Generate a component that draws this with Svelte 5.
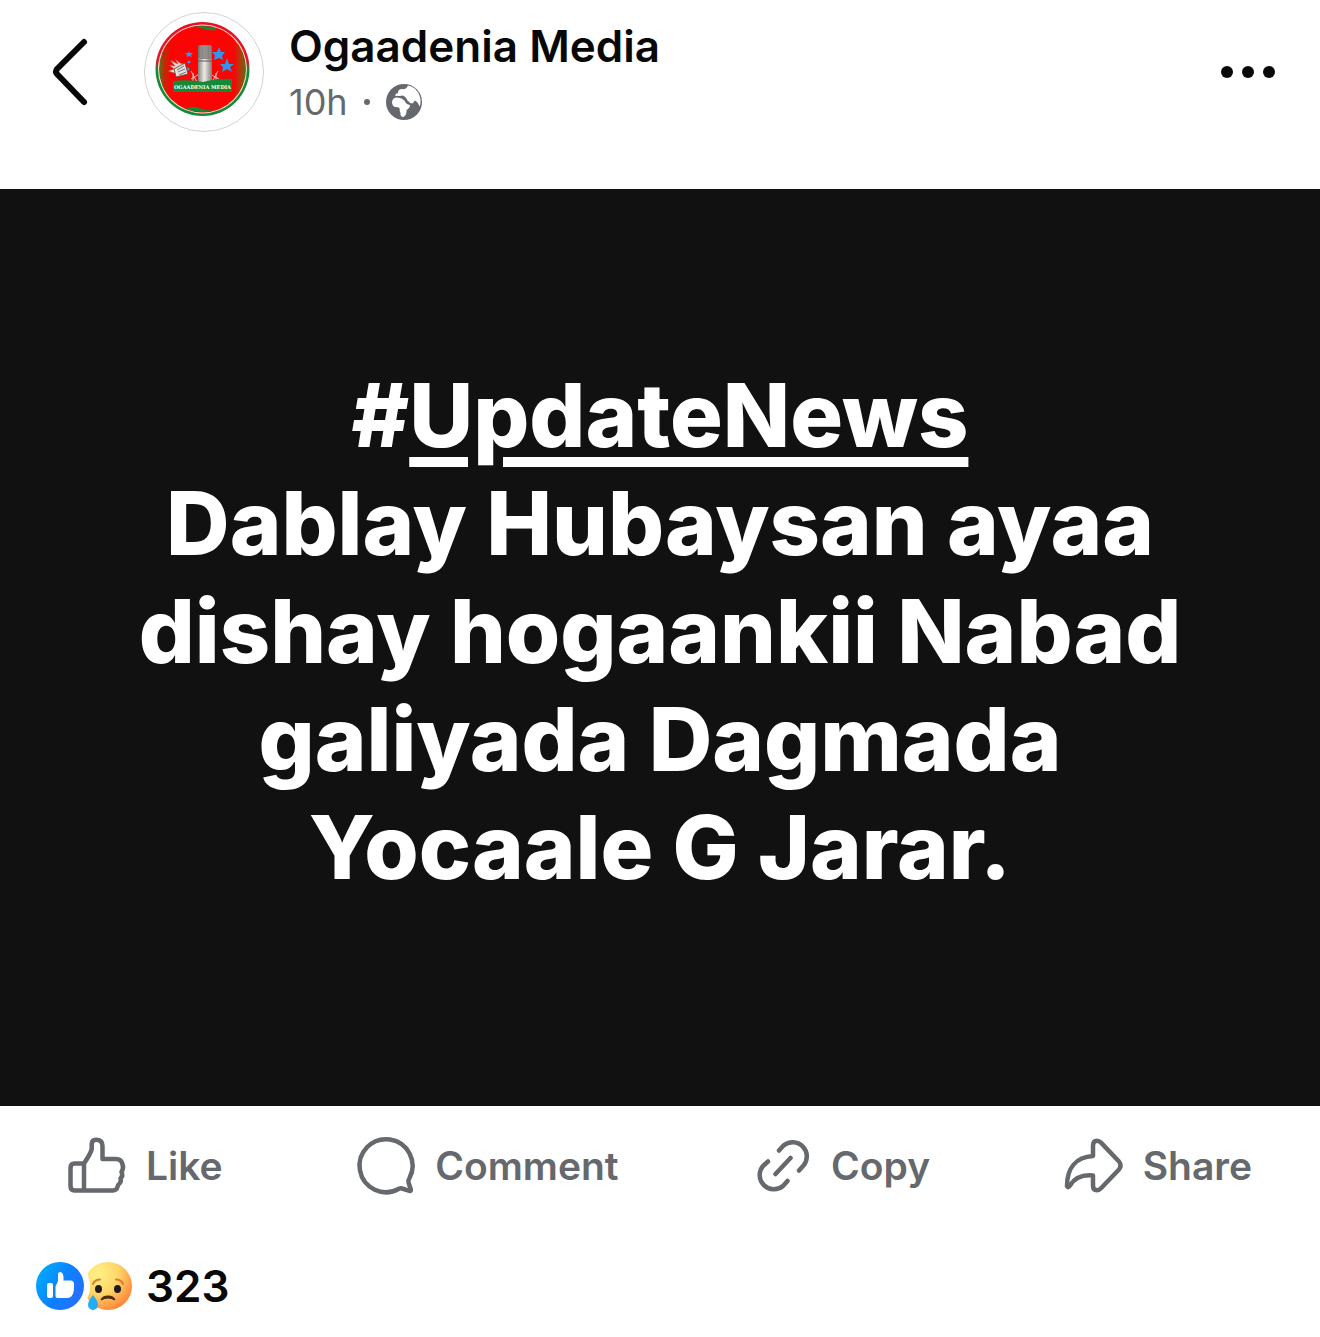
<script lang="ts">
  const post = {
    author: 'Ogaadenia Media',
    time: '10h',
    hashtag: 'UpdateNews',
    body: 'Dablay Hubaysan ayaa dishay hogaankii Nabad galiyada Dagmada Yocaale G Jarar.',
    reactions: 323,
  };

  const actions = [
    { label: 'Like', icon: 'like' },
    { label: 'Comment', icon: 'comment' },
    { label: 'Copy', icon: 'copy' },
    { label: 'Share', icon: 'share' },
  ];
</script>

<svelte:head>
  <title>{post.author}</title>
</svelte:head>

<article>
  <header>
    <button class="back" aria-label="Back">
      <svg width="36" height="66" viewBox="0 0 36 66">
        <path d="M32 3 L5 30 Q3 32.500 5 35 L32 63" fill="none" stroke="currentColor" stroke-width="6" stroke-linecap="round" stroke-linejoin="round" />
      </svg>
    </button>

    <a class="avatar" href="#profile" aria-label={post.author}>
      <svg width="120" height="120" viewBox="0 0 120 120">
        <defs>
          <clipPath id="disc"><circle cx="58.5" cy="57" r="43" /></clipPath>
          <linearGradient id="ring" x1="0" y1="0" x2="0" y2="1">
            <stop offset="0.42" stop-color="#e8112a" />
            <stop offset="0.5" stop-color="#128a38" />
          </linearGradient>
          <linearGradient id="field">
            <stop offset="0" stop-color="#4d7a1c" />
            <stop offset="0.06" stop-color="#c02a08" />
            <stop offset="0.14" stop-color="#fb0404" />
            <stop offset="0.86" stop-color="#fb0404" />
            <stop offset="0.93" stop-color="#b53a0c" />
            <stop offset="1" stop-color="#5f6a18" />
          </linearGradient>
          <linearGradient id="metal">
            <stop offset="0" stop-color="#86807c" />
            <stop offset="0.45" stop-color="#eeeae6" />
            <stop offset="1" stop-color="#847e7a" />
          </linearGradient>
        </defs>
        <circle cx="60" cy="60" r="59.5" fill="#fff" stroke="#d3d3d5" />
        <circle cx="58.5" cy="57" r="47" fill="url(#ring)" />
        <circle cx="58.5" cy="57" r="44.5" fill="#f4e3c8" />
        <circle cx="58.5" cy="57" r="43.5" fill="url(#field)" />
        <g clip-path="url(#disc)">
          <path d="M42 12 H72 V18 Q66 19 60 17 Q52 14 42 15Z" fill="#128a38" />
          <path d="M41 97 Q48 93 55 96 T75 99 V104 H40Z" fill="#128a38" />
        </g>
        <path d="M47 59 L53 70 M47 67 L57 61 M49 71 V61 M74 59 L68 70 M75 67 L64 61 M72 71 V61" stroke="#e3c4b8" />
        <rect x="54" y="33" width="14" height="38" rx="3" fill="url(#metal)" />
        <rect x="54" y="33" width="14" height="14" rx="3" fill="#746f6d" opacity="0.75" />
        <path d="M57 34 V46 M60 34 V46 M63 34 V46 M66 34 V46" stroke="#a39e9b" stroke-width="0.7" />
        <path d="M54 49 H68" stroke="#5e5a58" />
        <path d="M29 69 Q45 67 59 70 Q76 66 88 67 V80 H29Z" fill="#128a38" />
        <g fill="#3097ee">
          <path d="M75 35 L77 40 L81 40 L78 44 L79 48 L75 46 L70 48 L71 43 L68 40 L73 40Z" />
          <path d="M83 46 L85 52 L90 52 L86 55 L88 60 L83 57 L78 60 L79 55 L76 52 L81 52Z" />
          <path d="M45 39 L46 41 L49 41 L47 43 L48 45 L45 44 L43 45 L43 43 L41 41 L44 41Z" />
          <circle cx="45" cy="50" r="1.5" />
          <circle cx="44" cy="57" r="1.5" />
        </g>
        <path d="M26 48 L34 52 L31 47 L36 51 L40 52 L37 58 L30 61 L24 59 L30 57 L25 53 L31 54Z" fill="#ecd3c6" stroke="#8d4a3c" stroke-width="0.5" />
        <path d="M30 57 L41 51 L44 62 L32 65Z" fill="#e2dfdc" stroke="#5a4440" stroke-width="0.8" />
        <path d="M33 58 L40 54 M34 60 L41 57 M35 63 L42 60" stroke="#77706c" />
        <text x="58.5" y="77" text-anchor="middle">OGAADENIA MEDIA</text>
      </svg>
    </a>

    <div class="byline">
      <h1>{post.author}</h1>
      <p class="meta">
        <span>{post.time}</span>
        <span class="dot"></span>
        <svg width="36" height="36" viewBox="0 0 36 36" role="img" aria-label="Public">
          <circle cx="18" cy="18" r="18" fill="#65686c" />
          <path d="M9 11.500 Q9.500 9 12 9 Q12 5 16 5 Q19 5.500 20.500 4 L22 1.500 Q31 3 34 13 Q35.500 19 33.500 22.500 Q32 18 29 16.500 L26.500 19.500 Q23.500 19 21.500 16.500 Q19 11.500 16 11.500 Q13 12.500 9 11.500Z" fill="#fff" />
          <path d="M6 18 Q6.500 14 10 13.500 Q15 13 18.500 16.500 Q20 20.500 24 21 Q24 24 20.500 26 Q21 31 17.500 33 Q14 33 14.500 29 Q13.500 27 13.500 24 Q11 22.500 9 23 Q6 22 6 18Z" fill="#fff" />
        </svg>
      </p>
    </div>

    <button class="more" aria-label="More options">
      <svg width="54" height="12" viewBox="0 0 54 12" fill="currentColor">
        <circle cx="6" cy="6" r="6" /><circle cx="27" cy="6" r="6" /><circle cx="48" cy="6" r="6" />
      </svg>
    </button>
  </header>

  <section class="post">
    <p><a href="#updatenews">#<span>{post.hashtag}</span></a></p>
    <p>{post.body}</p>
  </section>

  <nav class="actions" aria-label="Post actions">
    {#each actions as action}
      <button>
        <svg width="58" height="58" viewBox="0 0 58 58" fill="none" stroke="currentColor" stroke-width="4.5" stroke-linecap="round" stroke-linejoin="round">
          {#if action.icon === 'like'}
            <path d="M16 26.500 H6.500 Q2.500 26.500 2.500 31 V49 Q2.500 53.500 6.500 53.500 H45 Q48.500 53.500 49.500 50 Q49.500 48 51.500 46.500 Q53.500 44.500 52.500 41.500 Q55.500 38.500 53.500 35 Q56 31 54.500 27.500 Q53.500 22 48 22 H34.500 V9 Q34.500 2.700 28 2.700 Q24 2.700 23.700 7 V12 Q23 16 16 26.500 V53.500" />
          {:else if action.icon === 'comment'}
            <path d="M42 51.800 A26.500 26.500 0 1 1 52.500 41 Q50.800 43.500 51.500 45.500 L53.800 52.500 Q54.300 54.300 52.500 53.800 L45 51.500 Q43.500 51 42 51.800Z" />
          {:else if action.icon === 'copy'}
            <path d="M26 13.500 L30.500 8.500 A14.200 14.200 0 0 1 50.500 28.500 L46 33.500 M15 24.500 L10 29 A14.200 14.200 0 0 0 30 49 L34.500 44 M22.500 37 L37.500 21" />
          {:else}
            <path d="M28 19 V8.500 Q28 3.700 32 3.700 Q34 3.700 36 5.700 L54 24.500 Q57 28.500 54 32.500 L36 51.300 Q34 53.300 32 53.300 Q28 53.300 28 48.500 V38.500 Q12 37 5 48.500 Q3 51.500 2 49 C2 31 11 20 28 19Z" />
          {/if}
        </svg>
        {action.label}
      </button>
    {/each}
  </nav>

  <footer>
    <svg width="96" height="48" viewBox="0 0 96 48" role="img" aria-label="Like and sad reactions">
      <defs>
        <linearGradient id="blue" x1="0" y1="0.2" x2="1" y2="0.8">
          <stop offset="0" stop-color="#02adfc" />
          <stop offset="0.5" stop-color="#0b82ff" />
          <stop offset="1" stop-color="#2b6cff" />
        </linearGradient>
        <radialGradient id="face" cx="0.3" cy="0.25" r="0.85">
          <stop offset="0" stop-color="#fff287" />
          <stop offset="0.5" stop-color="#ffd567" />
          <stop offset="1" stop-color="#ff7c35" />
        </radialGradient>
        <clipPath id="face-clip"><circle cx="72" cy="24" r="24" /></clipPath>
      </defs>
      <circle cx="72" cy="24" r="24" fill="url(#face)" />
      <g clip-path="url(#face-clip)"><circle cx="24" cy="24" r="30" fill="#fff" /></g>
      <circle cx="24" cy="24" r="24" fill="url(#blue)" />
      <rect x="11" y="21" width="6" height="15" rx="2" fill="#fff" />
      <path d="M19.500 25 Q19.500 23 21 21.500 Q22.500 19 22 15 V12 Q22 10 24.500 10 Q28 10.500 27.500 18.500 H35 Q38.500 19 38 23 Q38.500 36 31 36 H21.500 Q19.500 36 19.500 34Z" fill="#fff" />
      <ellipse cx="62.500" cy="27" rx="3.500" ry="4" fill="#1c1c1d" />
      <ellipse cx="81.500" cy="27" rx="3.500" ry="4" fill="#1c1c1d" />
      <path d="M57 22 Q59 17.500 64 17.500 M80 17.500 Q85 17.500 87 22" fill="none" stroke="#e07b28" stroke-width="2" stroke-linecap="round" />
      <path d="M65 38 Q66 34 72 34 Q78 34 79 38 Q75 36 72 36 Q69 36 65 38Z" fill="#4b280e" stroke="#4b280e" stroke-linejoin="round" />
      <path d="M57 33 Q62 39 62 43 A5 5 0 0 1 52 43 Q52 39 57 33Z" fill="#25aef3" />
    </svg>
    <strong>{post.reactions}</strong>
  </footer>
</article>

<style>
  :global(body) { margin: 0; background: #fff; }
  article { font-family: Inter, "Liberation Sans", sans-serif; color: #080809; }
  button { padding: 0; border: 0; background: none; font: inherit; color: inherit; cursor: pointer; }
  svg { display: block; flex: none; overflow: visible; }
  h1, p { margin: 0; }

  header { display: flex; align-items: center; padding: 12px 45px 57px 52px; }
  .avatar { margin: 0 25px 0 56px; }
  .avatar text { font: bold 5px "DejaVu Serif", serif; fill: #fff; }
  .byline { flex: 1; padding-top: 4px; }
  h1 { font-size: 44px; line-height: 56px; font-weight: 600; }
  .meta { display: flex; align-items: center; font-size: 36px; line-height: 56px; color: #65686c; }
  .dot { width: 6px; height: 6px; margin: 0 16px; border-radius: 50%; background: #65686c; }

  .post { padding: 172px 130px 205px; background: #111; color: #fff; font-size: 88px; line-height: 108px; font-weight: 800; text-align: center; }
  .post a { color: inherit; text-decoration: none; }
  .post span { text-decoration: underline; text-decoration-thickness: 10px; text-underline-offset: 10px; }

  .actions { display: flex; justify-content: space-between; padding: 31px 68px; color: #65686c; }
  .actions button { display: flex; align-items: center; gap: 20px; font-size: 39px; line-height: 58px; font-weight: 600; }

  footer { display: flex; align-items: center; gap: 14px; padding: 32px 36px 16px; }
  footer strong { font-size: 44px; line-height: 56px; font-weight: 600; }
</style>
